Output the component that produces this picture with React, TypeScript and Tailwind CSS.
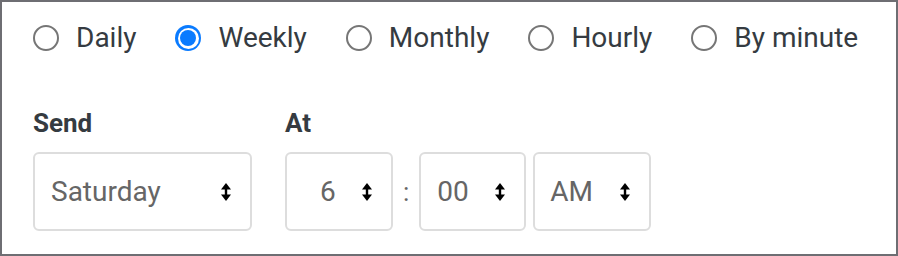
import React from 'react'

const font = { fontFamily: 'Roboto, "Liberation Sans", Arial, sans-serif' }

function Radio({ label, checked }: { label: string; checked?: boolean }) {
  return (
    <label className="flex items-center h-[26px] mr-[39px] whitespace-nowrap">
      {checked ? (
        <span className="w-[26px] h-[26px] rounded-full bg-[#0a7bff] flex items-center justify-center">
          <span className="w-[21px] h-[21px] rounded-full bg-white flex items-center justify-center">
            <span className="w-[16px] h-[16px] rounded-full bg-[#0a7bff]" />
          </span>
        </span>
      ) : (
        <span className="w-[26px] h-[26px] rounded-full border-2 border-[#767676] bg-white" />
      )}
      <span className="ml-[17px] text-[28px] leading-none text-[#353b41]">{label}</span>
    </label>
  )
}

function Arrows() {
  return (
    <svg width="10" height="18" viewBox="0 0 10 18" className="shrink-0">
      <path d="M5 0 L10 6.5 L0 6.5 Z" fill="#000" />
      <rect x="3.8" y="5" width="2.4" height="8" fill="#000" />
      <path d="M5 18 L10 11.5 L0 11.5 Z" fill="#000" />
    </svg>
  )
}

function Select({ value, width, padLeft }: { value: string; width: string; padLeft: string }) {
  return (
    <div
      className={`${width} ${padLeft} h-[79px] border-2 border-[#dddddd] rounded-[6px] bg-white flex items-center justify-between pr-[19px]`}
    >
      <span className="text-[28px] leading-none text-[#666666]">{value}</span>
      <Arrows />
    </div>
  )
}

export default function App() {
  return (
    <div style={font} className="w-[898px] h-[256px] border-2 border-[#6e6e73] bg-white pl-[31px] pt-[23px]">
      {/* Frequency */}
      <div className="flex">
        <Radio label="Daily" />
        <Radio label="Weekly" checked />
        <Radio label="Monthly" />
        <Radio label="Hourly" />
        <Radio label="By minute" />
      </div>

      {/* Send / At */}
      <div className="flex gap-[33px] mt-[57px]">
        <div>
          <div className="text-[26px] leading-[30px] font-bold text-[#353b41] mb-[14px]">Send</div>
          <Select value="Saturday" width="w-[219px]" padLeft="pl-[16px]" />
        </div>
        <div>
          <div className="text-[26px] leading-[30px] font-bold text-[#353b41] mb-[14px]">At</div>
          <div className="flex items-center">
            <Select value="6" width="w-[108px]" padLeft="pl-[33px]" />
            <span className="mx-[10px] text-[26px] leading-none text-[#666666]">:</span>
            <Select value="00" width="w-[107px]" padLeft="pl-[16px]" />
            <div className="w-[7px]" />
            <Select value="AM" width="w-[118px]" padLeft="pl-[15px]" />
          </div>
        </div>
      </div>
    </div>
  )
}
